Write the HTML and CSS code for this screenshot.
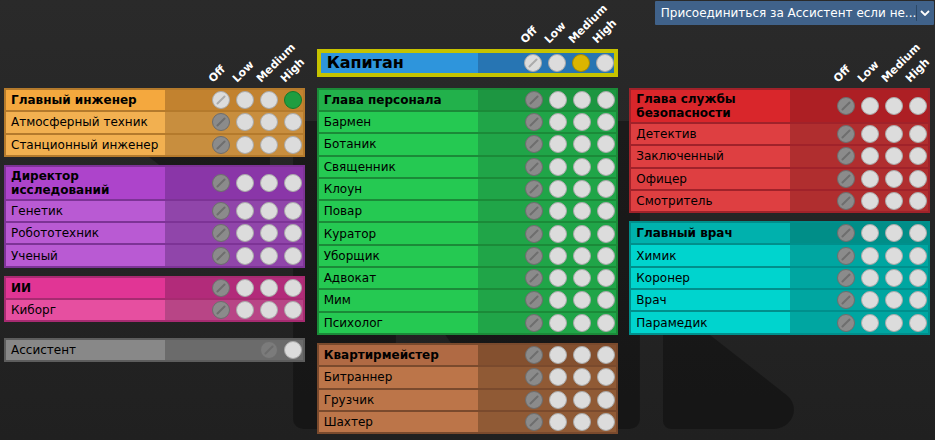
FILE: index.html
```html
<!DOCTYPE html>
<html lang="ru">
<head>
<meta charset="utf-8">
<title>Occupation</title>
<link rel="stylesheet" href="styles.css">
</head>
<body>
<svg class="logo" viewBox="0 0 425 200" preserveAspectRatio="none" aria-hidden="true">
  <path d="M178,0 L106.8,0 A6.76,6 0 0 0 100,6 L100,194 A6.76,6 0 0 0 106.8,200 L160,200 A6.76,6 0 0 0 166.7,194 L166.7,92.4 L238.9,197.1 A6.76,6 0 0 0 244.7,200 L318.2,200 A6.76,6 0 0 0 325,194 L325,6 A6.76,6 0 0 0 318.2,0 L263.5,0 A6.76,6 0 0 0 256.7,6 L256.7,108.6 L183.8,3.8 A6.76,6 0 0 0 178,0 Z"/>
  <path d="M4.84,22.1 A13.4,12.5 0 0 1 13.48,0 L79.6,0 A5.36,5 0 0 1 84.96,5 L84.96,84.9 Z"/>
  <path d="M420.16,177.9 A13.4,12.5 0 0 1 411.5,200 L345.4,200 A5.36,5 0 0 1 340,195 L340,115.1 Z"/>
</svg>

<div class="columns">
  <!-- LEFT -->
  <div class="col">
    <div class="col-head">
      <div class="prio"><div class="pc"><span>Off</span></div><div class="pc"><span>Low</span></div><div class="pc"><span>Medium</span></div><div class="pc"><span>High</span></div></div>
    </div>

    <div class="dept eng">
      <div class="row head"><div class="name">Главный инженер</div><div class="ctl"><i class="b off lt"></i><i class="b"></i><i class="b"></i><i class="b green"></i></div></div>
      <div class="row"><div class="name">Атмосферный техник</div><div class="ctl"><i class="b off"></i><i class="b"></i><i class="b"></i><i class="b"></i></div></div>
      <div class="row"><div class="name">Станционный инженер</div><div class="ctl"><i class="b off"></i><i class="b"></i><i class="b"></i><i class="b"></i></div></div>
    </div>

    <div class="dept sci">
      <div class="row head"><div class="name">Директор исследований</div><div class="ctl"><i class="b off"></i><i class="b"></i><i class="b"></i><i class="b"></i></div></div>
      <div class="row"><div class="name">Генетик</div><div class="ctl"><i class="b off"></i><i class="b"></i><i class="b"></i><i class="b"></i></div></div>
      <div class="row"><div class="name">Робототехник</div><div class="ctl"><i class="b off"></i><i class="b"></i><i class="b"></i><i class="b"></i></div></div>
      <div class="row"><div class="name">Ученый</div><div class="ctl"><i class="b off"></i><i class="b"></i><i class="b"></i><i class="b"></i></div></div>
    </div>

    <div class="dept sil">
      <div class="row head"><div class="name">ИИ</div><div class="ctl"><i class="b off"></i><i class="b"></i><i class="b"></i><i class="b"></i></div></div>
      <div class="row"><div class="name">Киборг</div><div class="ctl"><i class="b off"></i><i class="b"></i><i class="b"></i><i class="b"></i></div></div>
    </div>

    <div class="dept ast">
      <div class="row"><div class="name">Ассистент</div><div class="ctl"><i class="b off dim"></i><i class="b"></i></div></div>
    </div>
  </div>

  <!-- MIDDLE -->
  <div class="col">
    <div class="col-head mid">
      <div class="prio cap-prio"><div class="pc"><span>Off</span></div><div class="pc"><span>Low</span></div><div class="pc"><span>Medium</span></div><div class="pc"><span>High</span></div></div>
    </div>

    <div class="dept cap">
      <div class="row"><div class="name">Капитан</div><div class="ctl"><i class="b off lt"></i><i class="b"></i><i class="b yellow"></i><i class="b"></i></div></div>
    </div>

    <div class="dept srv">
      <div class="row head"><div class="name">Глава персонала</div><div class="ctl"><i class="b off"></i><i class="b"></i><i class="b"></i><i class="b"></i></div></div>
      <div class="row"><div class="name">Бармен</div><div class="ctl"><i class="b off"></i><i class="b"></i><i class="b"></i><i class="b"></i></div></div>
      <div class="row"><div class="name">Ботаник</div><div class="ctl"><i class="b off"></i><i class="b"></i><i class="b"></i><i class="b"></i></div></div>
      <div class="row"><div class="name">Священник</div><div class="ctl"><i class="b off"></i><i class="b"></i><i class="b"></i><i class="b"></i></div></div>
      <div class="row"><div class="name">Клоун</div><div class="ctl"><i class="b off"></i><i class="b"></i><i class="b"></i><i class="b"></i></div></div>
      <div class="row"><div class="name">Повар</div><div class="ctl"><i class="b off"></i><i class="b"></i><i class="b"></i><i class="b"></i></div></div>
      <div class="row"><div class="name">Куратор</div><div class="ctl"><i class="b off"></i><i class="b"></i><i class="b"></i><i class="b"></i></div></div>
      <div class="row"><div class="name">Уборщик</div><div class="ctl"><i class="b off"></i><i class="b"></i><i class="b"></i><i class="b"></i></div></div>
      <div class="row"><div class="name">Адвокат</div><div class="ctl"><i class="b off"></i><i class="b"></i><i class="b"></i><i class="b"></i></div></div>
      <div class="row"><div class="name">Мим</div><div class="ctl"><i class="b off"></i><i class="b"></i><i class="b"></i><i class="b"></i></div></div>
      <div class="row"><div class="name">Психолог</div><div class="ctl"><i class="b off"></i><i class="b"></i><i class="b"></i><i class="b"></i></div></div>
    </div>

    <div class="dept crg">
      <div class="row head"><div class="name">Квартирмейстер</div><div class="ctl"><i class="b off"></i><i class="b"></i><i class="b"></i><i class="b"></i></div></div>
      <div class="row"><div class="name">Битраннер</div><div class="ctl"><i class="b off"></i><i class="b"></i><i class="b"></i><i class="b"></i></div></div>
      <div class="row"><div class="name">Грузчик</div><div class="ctl"><i class="b off"></i><i class="b"></i><i class="b"></i><i class="b"></i></div></div>
      <div class="row"><div class="name">Шахтер</div><div class="ctl"><i class="b off"></i><i class="b"></i><i class="b"></i><i class="b"></i></div></div>
    </div>
  </div>

  <!-- RIGHT -->
  <div class="col">
    <div class="col-head right">
      <div class="dropdown">
        <span class="dd-text">Присоединиться за Ассистент если не...</span>
        <span class="dd-sep"></span>
        <span class="dd-arrow"><svg viewBox="0 0 10 6" width="10" height="6"><path d="M1 1 L5 5 L9 1" fill="none" stroke="#fff" stroke-width="1.8"/></svg></span>
      </div>
      <div class="prio"><div class="pc"><span>Off</span></div><div class="pc"><span>Low</span></div><div class="pc"><span>Medium</span></div><div class="pc"><span>High</span></div></div>
    </div>

    <div class="dept sec">
      <div class="row head"><div class="name">Глава службы безопасности</div><div class="ctl"><i class="b off"></i><i class="b"></i><i class="b"></i><i class="b"></i></div></div>
      <div class="row"><div class="name">Детектив</div><div class="ctl"><i class="b off"></i><i class="b"></i><i class="b"></i><i class="b"></i></div></div>
      <div class="row"><div class="name">Заключенный</div><div class="ctl"><i class="b off"></i><i class="b"></i><i class="b"></i><i class="b"></i></div></div>
      <div class="row"><div class="name">Офицер</div><div class="ctl"><i class="b off"></i><i class="b"></i><i class="b"></i><i class="b"></i></div></div>
      <div class="row"><div class="name">Смотритель</div><div class="ctl"><i class="b off"></i><i class="b"></i><i class="b"></i><i class="b"></i></div></div>
    </div>

    <div class="dept med">
      <div class="row head"><div class="name">Главный врач</div><div class="ctl"><i class="b off"></i><i class="b"></i><i class="b"></i><i class="b"></i></div></div>
      <div class="row"><div class="name">Химик</div><div class="ctl"><i class="b off"></i><i class="b"></i><i class="b"></i><i class="b"></i></div></div>
      <div class="row"><div class="name">Коронер</div><div class="ctl"><i class="b off"></i><i class="b"></i><i class="b"></i><i class="b"></i></div></div>
      <div class="row"><div class="name">Врач</div><div class="ctl"><i class="b off"></i><i class="b"></i><i class="b"></i><i class="b"></i></div></div>
      <div class="row"><div class="name">Парамедик</div><div class="ctl"><i class="b off"></i><i class="b"></i><i class="b"></i><i class="b"></i></div></div>
    </div>
  </div>
</div>
</body>
</html>
```

FILE: styles.css
```css
html, body {
  margin: 0;
  padding: 0;
}
body {
  width: 935px;
  height: 440px;
  overflow: hidden;
  position: relative;
  background-color: #252525;
  background-image: linear-gradient(to bottom, #2a2a2a 0%, #202020 100%);
  font-family: "DejaVu Sans", Verdana, sans-serif;
  font-size: 12px;
  color: #000;
}

.logo {
  position: absolute;
  left: 139px;
  top: 121px;
  width: 655px;
  height: 308px;
  fill: #000;
  opacity: 0.3;
  z-index: 0;
}

.columns {
  position: relative;
  z-index: 1;
  display: flex;
  gap: 11.67px;
  padding-left: 4px;
}

.col {
  width: 301px;
  display: flex;
  flex-direction: column;
}

.col-head {
  height: 88px;
  box-sizing: border-box;
  padding-bottom: 3px;
  display: flex;
  flex-direction: column;
  justify-content: flex-end;
}
.col-head.mid {
  height: 48.7px;
}
.col-head.right {
  justify-content: space-between;
}

.prio {
  display: flex;
  justify-content: flex-end;
  gap: 6px;
  padding-right: 3px;
  height: 13px;
}
.prio.cap-prio {
  padding-right: 4px;
}
.pc {
  width: 18px;
  height: 13px;
}
.pc span {
  display: block;
  margin-left: 3px;
  white-space: nowrap;
  color: #fff;
  font-weight: bold;
  font-size: 11px;
  line-height: 13px;
  transform-origin: 0 100%;
  transform: rotate(-45deg);
}

/* dropdown */
.dropdown {
  align-self: flex-end;
  margin-top: 1px;
  margin-right: -3.5px;
  width: 279px;
  height: 24px;
  box-sizing: border-box;
  background: #40628a;
  color: #fff;
  display: flex;
  align-items: center;
  border-radius: 1px;
}
.dd-text {
  flex: 1;
  padding-left: 6px;
  white-space: nowrap;
  overflow: hidden;
}
.dd-sep {
  width: 1px;
  height: 16px;
  background: #2c4866;
}
.dd-arrow {
  width: 17px;
  display: flex;
  justify-content: center;
  align-items: center;
}
.dd-arrow svg {
  display: block;
}

/* departments */
.dept {
  background: var(--frame);
  padding: 2px;
  display: flex;
  flex-direction: column;
  gap: 2px;
}
.dept + .dept {
  margin-top: 8px;
}
.dept.ast {
  margin-top: 15.3px;
}

.row {
  display: flex;
  min-height: 20.3px;
}
.name {
  flex: 0 0 159px;
  box-sizing: border-box;
  padding: 2px 5px;
  line-height: 14px;
  display: flex;
  align-items: center;
  background: var(--nm);
}
.row.head .name {
  background: var(--hn);
  font-weight: bold;
}
.ctl {
  flex: 1;
  display: flex;
  justify-content: flex-end;
  align-items: center;
  gap: 6px;
  padding-right: 1px;
  background: var(--rc);
}
.row.head .ctl {
  background: var(--hc);
}

/* buttons */
.b {
  display: block;
  position: relative;
  width: 18px;
  height: 18px;
  box-sizing: border-box;
  border-radius: 50%;
  background: #dcdcdc;
  border: 1px solid #a9a9a9;
}
.b.off {
  background: #8b8b8b;
  border-color: #6d6d6d;
}
.b.off::after {
  content: "";
  position: absolute;
  left: 50%;
  top: 50%;
  width: 12px;
  height: 2px;
  margin: -1px 0 0 -6px;
  border-radius: 1px;
  background: #6e6e6e;
  transform: rotate(-45deg);
}
.b.off.lt {
  background: #dcdcdc;
  border-color: #a9a9a9;
}
.b.off.lt::after {
  background: #ababab;
}
.b.off.dim {
  opacity: 0.5;
}
.b.green {
  background: #1f9d40;
  border-color: #137a2c;
}
.b.yellow {
  background: #dbb500;
  border-color: #a48800;
}

/* department colours */
.eng { --frame: #b47a2c; --hn: #f4a83e; --hc: #c2822f; --nm: #f2b050; --rc: #c88e3e; }
.sci { --frame: #7d3396; --hn: #ad44cb; --hc: #8a36a8; --nm: #b95ad3; --rc: #9045aa; }
.sil { --frame: #a72b71; --hn: #e13595; --hc: #b22b7a; --nm: #e64fa0; --rc: #b84586; }
.ast { --frame: #5d5d5d; --hn: #888888; --hc: #6b6b6b; --nm: #888888; --rc: #6b6b6b; }
.srv { --frame: #1b8a38; --hn: #22b14b; --hc: #1d9641; --nm: #25c952; --rc: #20a548; }
.crg { --frame: #7a4a2d; --hn: #b06a44; --hc: #84502f; --nm: #bc7549; --rc: #905a35; }
.sec { --frame: #a0222a; --hn: #d9262b; --hc: #ad1f24; --nm: #de3f41; --rc: #b02e2f; }
.med { --frame: #008f8c; --hn: #00b1ad; --hc: #008e88; --nm: #00d4ce; --rc: #00a6a1; }

.dept.cap {
  --nm: #2e95dc;
  --rc: #2775b3;
  padding: 0;
  border: 4px solid #c6c300;
  background: #c6c300;
}
.dept.cap .name {
  flex-basis: 157.5px;
  padding: 0 6px;
  font-size: 16px;
  font-weight: bold;
  line-height: 20px;
}
.dept.cap .ctl {
  padding-right: 0;
}
.dept.cap + .dept {
  margin-top: 10.7px;
}
```
